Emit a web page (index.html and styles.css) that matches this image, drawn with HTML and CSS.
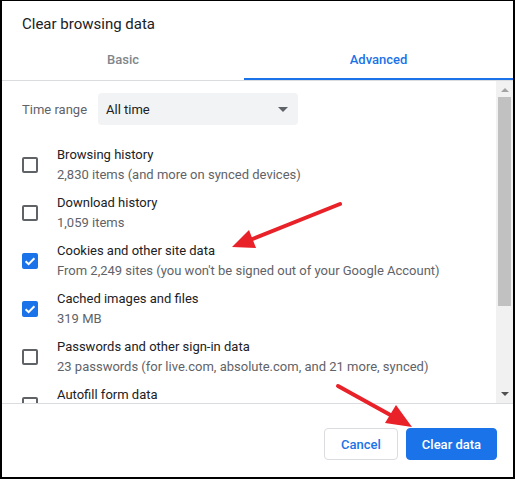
FILE: index.html
```html
<!DOCTYPE html>
<html>
<head>
<meta charset="utf-8">
<link rel="stylesheet" href="styles.css">
</head>
<body>
<div class="dialog">
  <div class="title">Clear browsing data</div>
  <div class="tabs">
    <div class="tab basic">Basic</div>
    <div class="tab active">Advanced</div>
  </div>
  <div class="body">
    <div class="content">
      <div class="range">
        <span class="range-label">Time range</span>
        <div class="select">
          <span>All time</span>
          <span class="caret"></span>
        </div>
      </div>
      <div class="item">
        <span class="cb"></span>
        <div class="texts"><div class="t">Browsing history</div><div class="s">2,830 items (and more on synced devices)</div></div>
      </div>
      <div class="item">
        <span class="cb"></span>
        <div class="texts"><div class="t">Download history</div><div class="s">1,059 items</div></div>
      </div>
      <div class="item">
        <span class="cb on"><svg viewBox="0 0 16 16" width="16" height="16"><path d="M3.6 8.2 L6.6 11.1 L12.4 5.2" fill="none" stroke="#fff" stroke-width="2"/></svg></span>
        <div class="texts"><div class="t">Cookies and other site data</div><div class="s">From 2,249 sites (you won't be signed out of your Google Account)</div></div>
      </div>
      <div class="item">
        <span class="cb on"><svg viewBox="0 0 16 16" width="16" height="16"><path d="M3.6 8.2 L6.6 11.1 L12.4 5.2" fill="none" stroke="#fff" stroke-width="2"/></svg></span>
        <div class="texts"><div class="t">Cached images and files</div><div class="s">319 MB</div></div>
      </div>
      <div class="item">
        <span class="cb"></span>
        <div class="texts"><div class="t">Passwords and other sign-in data</div><div class="s">23 passwords (for live.com, absolute.com, and 21 more, synced)</div></div>
      </div>
      <div class="item">
        <span class="cb"></span>
        <div class="texts"><div class="t">Autofill form data</div><div class="s">&nbsp;</div></div>
      </div>
    </div>
    <div class="scrollbar">
      <span class="sarrow up"></span>
      <div class="track"><div class="thumb"></div></div>
      <span class="sarrow down"></span>
    </div>
  </div>
  <div class="footer">
    <button class="btn cancel">Cancel</button>
    <button class="btn primary">Clear data</button>
  </div>
  <svg class="arrows" width="515" height="479" viewBox="0 0 515 479">
    <line x1="340" y1="204" x2="250" y2="240" stroke="#e92128" stroke-width="4" stroke-linecap="round"/>
    <polygon points="232,247 249,230 256,248" fill="#e92128"/>
    <line x1="338" y1="386" x2="394" y2="417" stroke="#e92128" stroke-width="4" stroke-linecap="round"/>
    <polygon points="412,427 385,423 396,405" fill="#e92128"/>
  </svg>
</div>
</body>
</html>
```
FILE: styles.css
```css
html, body {
  margin: 0;
  padding: 0;
  background: #fff;
}
.dialog {
  position: relative;
  box-sizing: border-box;
  width: 515px;
  height: 479px;
  border-style: solid;
  border-color: #000;
  border-width: 1px 2px 2px 2px;
  display: flex;
  flex-direction: column;
  font-family: Roboto, "Liberation Sans", sans-serif;
  color: #202124;
  overflow: hidden;
}
.title {
  font-size: 15px;
  line-height: 20px;
  padding: 13px 0 0 20px;
  height: 27px;
}
.tabs {
  display: flex;
  height: 39px;
  border-bottom: 1px solid #dadce0;
}
.tab {
  box-sizing: border-box;
  display: flex;
  align-items: center;
  justify-content: center;
  padding-bottom: 3px;
  font-size: 13px;
  font-weight: 500;
  color: #80868b;
}
.tab.basic {
  width: 242px;
}
.tab.active {
  flex: 1;
  color: #1a73e8;
  box-shadow: inset 0 -2px 0 #1a73e8;
}
.body {
  flex: 1;
  display: flex;
  min-height: 0;
}
.content {
  flex: 1;
  overflow: hidden;
  padding: 12px 0 0 20px;
}
.range {
  display: flex;
  align-items: center;
  height: 32px;
}
.range-label {
  font-size: 13px;
  color: #5f6368;
  width: 76px;
}
.select {
  box-sizing: border-box;
  width: 200px;
  height: 32px;
  background: #f1f3f4;
  border-radius: 4px;
  display: flex;
  align-items: center;
  justify-content: space-between;
  padding: 0 8px 0 8px;
  font-size: 13px;
  color: #202124;
}
.caret {
  width: 0;
  height: 0;
  border-left: 5px solid transparent;
  border-right: 5px solid transparent;
  border-top: 5px solid #5f6368;
  margin-right: 2px;
}
.range + .item {
  margin-top: 16px;
}
.item {
  display: flex;
  align-items: center;
  height: 48px;
}
.cb {
  box-sizing: border-box;
  width: 16px;
  height: 16px;
  border: 2px solid #5f6368;
  border-radius: 2px;
  flex: none;
  display: flex;
}
.cb.on {
  border: none;
  background: #1a73e8;
}
.texts {
  margin-left: 19px;
  font-size: 13px;
  line-height: 20px;
}
.t {
  color: #202124;
}
.s {
  color: #5f6368;
}
.scrollbar {
  width: 17px;
  background: #f1f1f1;
  display: flex;
  flex-direction: column;
  align-items: center;
}
.sarrow {
  width: 0;
  height: 0;
  border-left: 4px solid transparent;
  border-right: 4px solid transparent;
}
.sarrow.up {
  border-bottom: 4px solid #a3a3a3;
  margin-top: 7px;
}
.sarrow.down {
  border-top: 4px solid #505050;
  margin-bottom: 7px;
}
.track {
  flex: 1;
  width: 100%;
  padding-top: 5px;
  box-sizing: border-box;
}
.thumb {
  margin: 0 auto;
  width: 13px;
  height: 209px;
  background: #c1c1c1;
}
.footer {
  border-top: 1px solid #dadce0;
  display: flex;
  justify-content: flex-end;
  gap: 8px;
  padding: 24px 16px 0 0;
  height: 49px;
}
.btn {
  font-family: Roboto, "Liberation Sans", sans-serif;
  font-size: 13px;
  font-weight: 500;
  height: 32px;
  border-radius: 4px;
  padding: 0;
  white-space: nowrap;
  cursor: pointer;
}
.cancel {
  background: #fff;
  color: #1a73e8;
  border: 1px solid #dadce0;
  width: 74px;
}
.primary {
  background: #1a73e8;
  color: #fff;
  border: 1px solid #1a73e8;
  width: 91px;
}
.arrows {
  position: absolute;
  left: -2px;
  top: -1px;
  pointer-events: none;
}
```
